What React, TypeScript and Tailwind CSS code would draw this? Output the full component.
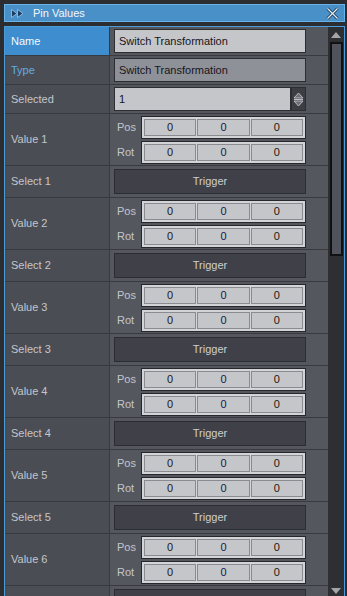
import React from "react";

const font = { fontFamily: "Tahoma, 'Liberation Sans', Arial, sans-serif" };

const TitleIcon = () => (
  <svg width="13" height="9" viewBox="0 0 13 9">
    <polygon points="0.5,0.5 6,4.5 0.5,8.5" fill="#1f3f62" stroke="#9ccdf0" strokeWidth="0.8" />
    <polygon points="6.5,0.5 12,4.5 6.5,8.5" fill="#1f3f62" stroke="#9ccdf0" strokeWidth="0.8" />
  </svg>
);

const CloseIcon = () => (
  <svg width="13" height="13" viewBox="0 0 13 13">
    <path d="M1.5 1.5 L11.5 11.5 M11.5 1.5 L1.5 11.5" stroke="#1d3a58" strokeWidth="3" />
    <path d="M1.5 1.5 L11.5 11.5 M11.5 1.5 L1.5 11.5" stroke="#e4eef6" strokeWidth="1.2" />
  </svg>
);

const Spinner = () => (
  <div className="w-[15px] h-[24px] bg-[#3d3e43] border border-[#2d2e32] flex items-center justify-center">
    <svg width="11" height="15" viewBox="0 0 11 15">
      <polygon points="5.5,1 10,6 1,6" fill="#6c6e75" stroke="#b9bbc1" strokeWidth="1" />
      <line x1="1" y1="7.5" x2="10" y2="7.5" stroke="#b9bbc1" strokeWidth="1" />
      <polygon points="1,9 10,9 5.5,14" fill="#6c6e75" stroke="#b9bbc1" strokeWidth="1" />
    </svg>
  </div>
);

const VectorGroup = ({ label }: { label: string }) => (
  <div className="flex items-center h-[23px]">
    <span className="w-[27px] pl-[3px] text-[11px] text-[#c4c6cb]">{label}</span>
    <div className="w-[165px] h-[23px] border border-[#26272b] bg-[#d3d4d7] p-[2px] grid grid-cols-3 gap-[1px]">
      {["#24180c", "#101c4c", "#24180c"].map((c, i) => (
        <div
          key={i}
          className="border border-[#8a8b90] bg-[#c5c6ca] flex items-center justify-center text-[11px] leading-none"
          style={{ color: c }}
        >
          0
        </div>
      ))}
    </div>
  </div>
);

const Row = ({
  label,
  labelClass,
  h,
  children,
}: {
  label: string;
  labelClass?: string;
  h: string;
  children: React.ReactNode;
}) => (
  <div className={`flex shrink-0 border-b border-[#393a3f] ${h}`}>
    <div
      className={`w-[105px] shrink-0 border-r border-[#393a3f] flex items-center pl-[6px] text-[11px] ${
        labelClass ?? "bg-[#4b4d54] text-[#c4c6cb]"
      }`}
    >
      {label}
    </div>
    <div className="flex-1 bg-[#55575f] pl-[4px] flex flex-col justify-center">{children}</div>
  </div>
);

const TextField = ({ value, dim }: { value: string; dim?: boolean }) => (
  <div
    className={`w-[192px] h-[24px] border border-[#2d2e32] flex items-center pl-[4px] text-[11px] text-[#15151c] ${
      dim ? "bg-[#8f9199]" : "bg-[#c5c6ca]"
    }`}
  >
    {value}
  </div>
);

const Trigger = ({ text = "Trigger" }: { text?: string }) => (
  <div className="w-[192px] h-[25px] border border-[#2c2d31] bg-[#404148] flex items-center justify-center text-[11px] text-[#cdced3]">
    {text}
  </div>
);

export default function App() {
  const items = [1, 2, 3, 4, 5];
  return (
    <div
      className="w-[347px] h-[596px] overflow-hidden bg-[#2c2d31] pl-[4px] pr-[2px] pt-[4px] flex flex-col"
      style={font}
    >
      <div className="h-[18px] shrink-0 border border-[#68b2e8] bg-[#4a90c8] flex items-center pl-[6px] pr-[5px]">
        <TitleIcon />
        <span className="ml-[9px] text-[11px] text-[#f2f6fa]">Pin Values</span>
        <span className="ml-auto flex">
          <CloseIcon />
        </span>
      </div>
      <div className="mt-[4px] flex flex-1 min-h-0 border-t border-l border-r border-[#4c9ad8]">
        <div className="flex-1 min-w-0 overflow-hidden flex flex-col">
          <Row label="Name" h="h-[29px]" labelClass="bg-[#3e8ecf] text-[#f4f8fc]">
            <TextField value="Switch Transformation" />
          </Row>
          <Row label="Type" h="h-[29px]" labelClass="bg-[#4b4d54] text-[#62aee6]">
            <TextField value="Switch Transformation" dim />
          </Row>
          <Row label="Selected" h="h-[29px]">
            <div className="flex">
              <div className="w-[177px] h-[24px] border border-[#2d2e32] bg-[#c5c6ca] flex items-center pl-[4px] text-[11px] text-[#15151c]">
                1
              </div>
              <Spinner />
            </div>
          </Row>
          {items.map((n) => (
            <React.Fragment key={n}>
              <Row label={`Value ${n}`} h="h-[52px]">
                <div className="flex flex-col gap-[2px] pt-[1px]">
                  <VectorGroup label="Pos" />
                  <VectorGroup label="Rot" />
                </div>
              </Row>
              <Row label={`Select ${n}`} h="h-[32px]">
                <Trigger />
              </Row>
            </React.Fragment>
          ))}
          <Row label="Value 6" h="h-[52px]">
            <div className="flex flex-col gap-[2px] pt-[1px]">
              <VectorGroup label="Pos" />
              <VectorGroup label="Rot" />
            </div>
          </Row>
          <div className="flex shrink-0 h-[32px]">
            <div className="w-[105px] shrink-0 border-r border-[#393a3f] bg-[#4b4d54]" />
            <div className="flex-1 bg-[#55575f] pl-[4px] pt-[3px]">
              <div className="w-[192px] h-[25px] border border-[#2c2d31] bg-[#404148]" />
            </div>
          </div>
        </div>
        <div className="w-[16px] shrink-0 bg-[#2e2f33] flex flex-col items-center">
          <svg width="10" height="6" viewBox="0 0 10 6" className="mt-[5px]">
            <polygon points="5,0 10,6 0,6" fill="#a3a5ab" />
          </svg>
          <div className="mt-[4px] w-[13px] h-[214px] border-2 border-[#111114] bg-[#50535b]" />
          <svg width="10" height="6" viewBox="0 0 10 6" className="mt-auto mb-[2px]">
            <polygon points="0,0 10,0 5,6" fill="#a3a5ab" />
          </svg>
        </div>
      </div>
    </div>
  );
}
